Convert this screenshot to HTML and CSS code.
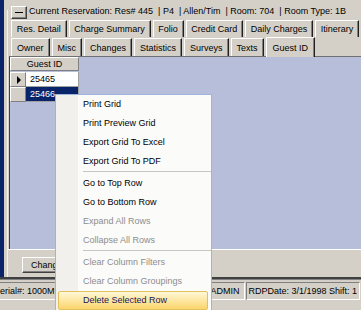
FILE: index.html
```html
<!DOCTYPE html>
<html lang="en">
<head>
    <meta charset="UTF-8">
    <title>Guest ID</title>
    <link rel="stylesheet" href="styles.css">
</head>
<body>
    <div class="screen">
        <div class="side"></div>
        <div class="rail"></div>
        <div class="form">
            <div class="resbar">
                <span class="minbtn"></span>
                <span class="restext">Current Reservation: Res# 445 &nbsp;| P4 &nbsp;| Allen/Tim &nbsp;| Room: 704 &nbsp;| Room Type: 1B</span>
            </div>
            <div class="tabrow back">
                <div class="tab">Res. Detail</div>
                <div class="tab">Charge Summary</div>
                <div class="tab">Folio</div>
                <div class="tab">Credit Card</div>
                <div class="tab">Daily Charges</div>
                <div class="tab">Itinerary</div>
            </div>
            <div class="tabrow front">
                <div class="tab">Owner</div>
                <div class="tab">Misc</div>
                <div class="tab">Changes</div>
                <div class="tab">Statistics</div>
                <div class="tab">Surveys</div>
                <div class="tab">Texts</div>
                <div class="tab on">Guest ID</div>
            </div>
            <div class="page">
                <div class="grid">
                    <div class="gh">Guest ID</div>
                    <div class="ri"><span class="arrow"></span></div>
                    <div class="gc">25465</div>
                    <div class="ri"></div>
                    <div class="gc sel">25466</div>
                </div>
            </div>
            <div class="btnbar">
                <button class="btn">Change Guest</button>
            </div>
        </div>
    </div>

    <div class="status">
        <div class="sp first">Serial#: 1000M</div>
        <div class="sp user">User: ADMIN</div>
        <div class="sp">RDPDate: 3/1/1998 Shift: 1</div>
    </div>

    <div class="menu">
        <div class="mi">Print Grid</div>
        <div class="mi">Print Preview Grid</div>
        <div class="mi">Export Grid To Excel</div>
        <div class="mi">Export Grid To PDF</div>
        <div class="sep"></div>
        <div class="mi">Go to Top Row</div>
        <div class="mi">Go to Bottom Row</div>
        <div class="mi off">Expand All Rows</div>
        <div class="mi off">Collapse All Rows</div>
        <div class="sep"></div>
        <div class="mi off">Clear Column Filters</div>
        <div class="mi off">Clear Column Groupings</div>
        <div class="mi hot">Delete Selected Row</div>
    </div>
</body>
</html>
```

FILE: styles.css
```css
* {
    box-sizing: border-box;
}
body {
    margin: 0;
    width: 361px;
    height: 310px;
    overflow: hidden;
    position: relative;
    background: #d4d0c8;
    font-family: "Liberation Sans", Arial, sans-serif;
    font-size: 9px;
    color: #000;
}
.screen {
    display: flex;
    height: 277px;
}
.side {
    width: 4px;
    background: #0a246a;
}
.rail {
    width: 4px;
    margin-top: 10px;
    border-right: 1px solid #f4f3ef;
}
.form {
    flex: 1;
    min-width: 0;
    display: flex;
    flex-direction: column;
}
.resbar {
    height: 20px;
    display: flex;
    align-items: flex-start;
    padding-left: 3px;
}
.minbtn {
    width: 16px;
    height: 13px;
    margin-top: 6px;
    display: flex;
    align-items: center;
    justify-content: center;
    border: 1px solid;
    border-color: #fff #404040 #404040 #fff;
    box-shadow: inset -1px -1px #808080;
}
.minbtn::before {
    content: "";
    width: 8px;
    height: 1px;
    background: #000;
}
.restext {
    margin: 6px 0 0 2px;
    line-height: 11px;
    white-space: nowrap;
}
.tabrow {
    display: flex;
    gap: 2px;
    margin-left: 3px;
}
.tabrow.back {
    height: 17px;
    margin-right: 2px;
}
.tabrow.back .tab {
    flex: 1 1 auto;
}
.tabrow.front {
    height: 18px;
    margin-top: 1px;
}
.tab {
    display: flex;
    align-items: center;
    justify-content: center;
    padding: 0 4px;
    white-space: nowrap;
    background: #d4d0c8;
    border-top: 1px solid #fff;
    border-left: 1px solid #fff;
    border-right: 1px solid #202020;
    box-shadow: inset -1px 0 #808080;
}
.tabrow.front .tab {
    padding: 0 5px;
}
.tabrow.front .tab.on {
    height: 20px;
    margin-top: -1px;
    padding: 0 6px;
    position: relative;
    z-index: 1;
}
.page {
    flex: 1;
    margin-left: 1px;
    border-top: 1px solid #707070;
    border-left: 1px solid #404040;
    background: #b7bed9;
}
.grid {
    display: grid;
    grid-template-columns: 16px 53px;
    grid-auto-rows: 15px;
    width: 69px;
}
.gh {
    grid-column: 1 / 3;
    height: 14px;
    line-height: 12px;
    text-align: center;
    background: #d4d0c8;
    border: 1px solid;
    border-color: #fff #808080 #808080 #fff;
}
.ri {
    display: flex;
    align-items: center;
    padding-left: 6px;
    background: #d4d0c8;
    border: 1px solid;
    border-color: #fff #808080 #808080 #fff;
}
.arrow {
    width: 0;
    height: 0;
    border-top: 4px solid transparent;
    border-bottom: 4px solid transparent;
    border-left: 4px solid #000;
}
.gc {
    padding-left: 4px;
    line-height: 14px;
    background: #fff;
    border-right: 1px solid #a0a0a0;
    border-bottom: 1px solid #a0a0a0;
}
.gc.sel {
    background: #0a246a;
    color: #fff;
}
.btnbar {
    height: 28px;
    border-top: 1px solid #fff;
    padding: 7px 0 0 14px;
}
.btn {
    width: 80px;
    height: 16px;
    padding: 0 0 0 8px;
    text-align: left;
    font: inherit;
    color: #000;
    background: #d4d0c8;
    border: 1px solid;
    border-color: #fff #404040 #404040 #fff;
    box-shadow: inset -1px -1px #808080;
}
.status {
    height: 33px;
    display: flex;
    gap: 1px;
    padding-top: 3px;
    border-top: 2px solid #404040;
    box-shadow: inset 0 1px #808080;
}
.sp {
    height: 18px;
    padding: 0 2px;
    line-height: 16px;
    white-space: nowrap;
    border: 1px solid;
    border-color: #808080 #fff #fff #808080;
}
.sp.first {
    margin-left: -10px;
    padding: 0 1px 0 3px;
}
.sp.user {
    width: 187px;
    padding-right: 4px;
    text-align: right;
}
.menu {
    position: absolute;
    left: 55px;
    top: 94px;
    width: 157px;
    height: 230px;
    border: 1px solid #9db5dd;
    background: linear-gradient(to right, #f1f0ec 22px, #fbfbfa 22px);
}
.mi {
    height: 19px;
    line-height: 19px;
    padding-left: 27px;
    white-space: nowrap;
}
.mi.off {
    color: #8d8d8d;
}
.mi.hot {
    margin: 0 3px 0 2px;
    padding-left: 24px;
    line-height: 17px;
    color: #14185a;
    border: 1px solid #e2c05e;
    border-radius: 2px;
    background: linear-gradient(#fff7d6, #fcd66c);
}
.sep {
    height: 3px;
    margin-left: 27px;
    border-top: 1px solid #c8c6c0;
}
```
